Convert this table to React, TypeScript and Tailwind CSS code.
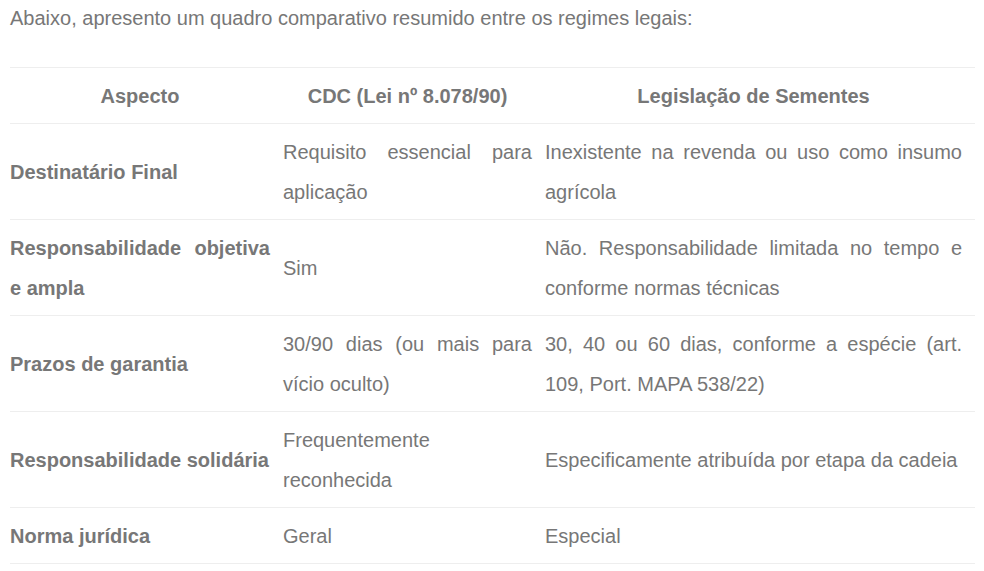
const rows: [string, string, string][] = [
  ["Destinatário Final", "Requisito essencial para aplicação", "Inexistente na revenda ou uso como insumo agrícola"],
  ["Responsabilidade objetiva e ampla", "Sim", "Não. Responsabilidade limitada no tempo e conforme normas técnicas"],
  ["Prazos de garantia", "30/90 dias (ou mais para vício oculto)", "30, 40 ou 60 dias, conforme a espécie (art. 109, Port. MAPA 538/22)"],
  ["Responsabilidade solidária", "Frequentemente reconhecida", "Especificamente atribuída por etapa da cadeia"],
  ["Norma jurídica", "Geral", "Especial"],
];

export default function App() {
  return (
    <div className="min-h-screen bg-white px-[10px] text-[20px] text-[#777] [font-family:'Liberation_Sans',Arial,sans-serif]">
      <p className="leading-[36px] mb-[31px]">
        Abaixo, apresento um quadro comparativo resumido entre os regimes legais:
      </p>
      <table className="w-[965px] border-collapse table-fixed">
        <colgroup>
          <col className="w-[273px]" />
          <col className="w-[262px]" />
          <col className="w-[430px]" />
        </colgroup>
        <thead>
          <tr className="border-y border-[#eee]">
            {["Aspecto", "CDC (Lei nº 8.078/90)", "Legislação de Sementes"].map((h) => (
              <th key={h} className="pr-[13px] pt-[8px] pb-[7px] text-center font-bold leading-[40px]">
                {h}
              </th>
            ))}
          </tr>
        </thead>
        <tbody>
          {rows.map((r) => (
            <tr key={r[0]} className="border-b border-[#eee]">
              <td className="pr-[13px] pt-[8px] pb-[7px] font-bold leading-[40px] text-justify align-middle">{r[0]}</td>
              <td className="pr-[13px] pt-[8px] pb-[7px] leading-[40px] text-justify align-middle">{r[1]}</td>
              <td className="pr-[13px] pt-[8px] pb-[7px] leading-[40px] text-justify align-middle">{r[2]}</td>
            </tr>
          ))}
        </tbody>
      </table>
    </div>
  );
}
